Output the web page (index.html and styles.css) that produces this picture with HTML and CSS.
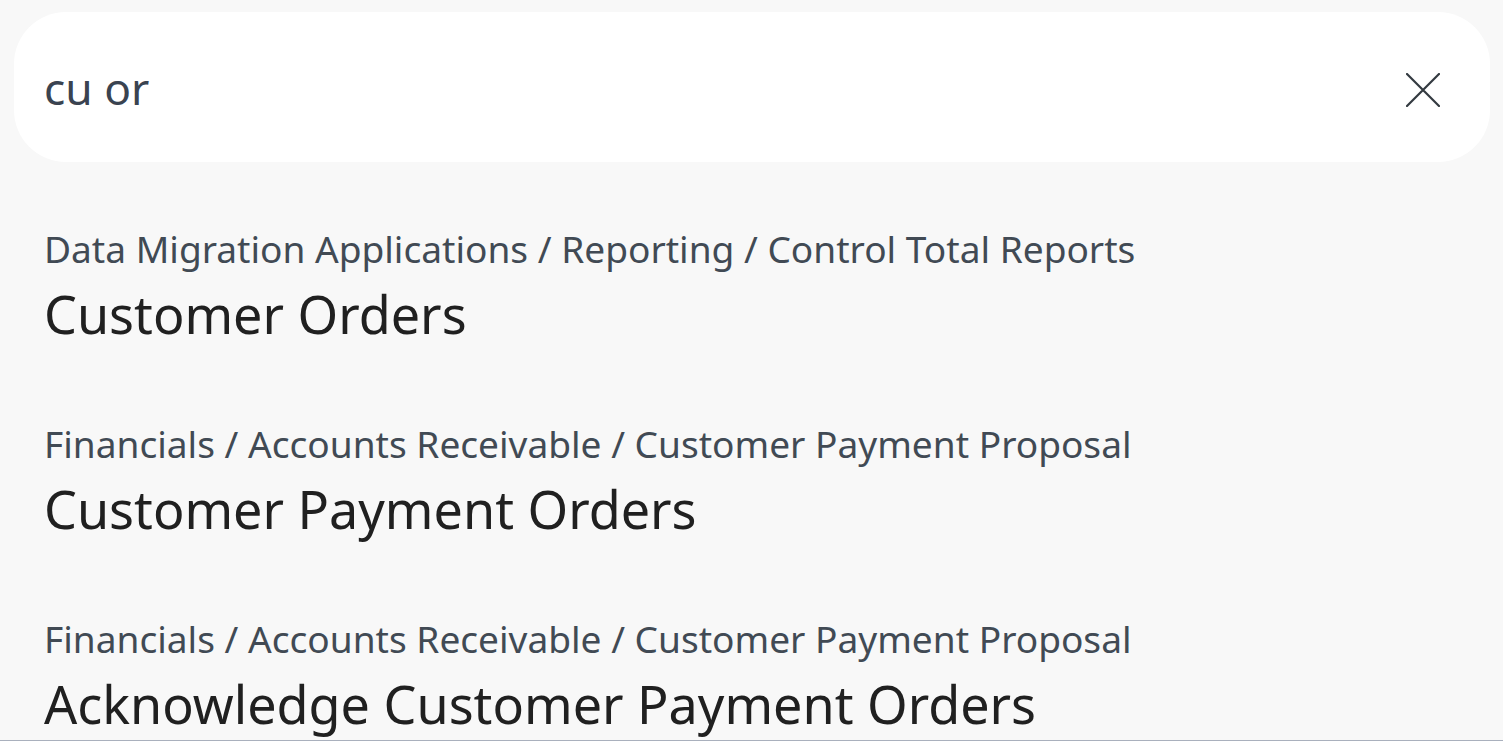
FILE: index.html
```html
<!DOCTYPE html>
<html>
<head>
<meta charset="utf-8">
<link rel="stylesheet" href="styles.css">
</head>
<body>
<div class="page">
  <div class="search">
    <span class="query">cu or</span>
    <button class="clear" aria-label="Clear">
      <svg width="34" height="34" viewBox="0 0 34 34"><path d="M1 1 L33 33 M33 1 L1 33" stroke="#333a40" stroke-width="2.2" fill="none" stroke-linecap="round"/></svg>
    </button>
  </div>
  <ul class="results">
    <li class="result">
      <div class="crumb">Data Migration Applications / Reporting / Control Total Reports</div>
      <div class="title">Customer Orders</div>
    </li>
    <li class="result">
      <div class="crumb">Financials / Accounts Receivable / Customer Payment Proposal</div>
      <div class="title">Customer Payment Orders</div>
    </li>
    <li class="result">
      <div class="crumb">Financials / Accounts Receivable / Customer Payment Proposal</div>
      <div class="title">Acknowledge Customer Payment Orders</div>
    </li>
  </ul>
</div>
</body>
</html>
```
FILE: styles.css
```css
html, body {
  margin: 0;
  padding: 0;
  height: 100%;
  overflow: hidden;
}
body {
  background: #f8f8f8;
  font-family: "Noto Sans", sans-serif;
  font-weight: 400;
}
.page {
  height: 740px;
  border-bottom: 1px solid #a9b0bd;
  overflow: hidden;
}
.search {
  margin: 12px 13px 0 14px;
  height: 150px;
  background: #ffffff;
  border-radius: 52px;
  display: flex;
  align-items: center;
  padding: 0 50px 0 30px;
}
.query {
  flex: 1;
  font-size: 44.3px;
  color: #3a4350;
  line-height: 60px;
  margin-top: 2px;
}
.clear {
  border: 0;
  background: none;
  padding: 0;
  width: 34px;
  height: 34px;
  display: flex;
  cursor: pointer;
  margin-top: 6px;
}
.results {
  list-style: none;
  margin: 0;
  padding: 61px 0 0 44px;
}
.result {
  height: 195px;
}
.crumb {
  font-size: 37.1px;
  color: #414a54;
  line-height: 52px;
}
.title {
  font-size: 52.1px;
  color: #202020;
  line-height: 78px;
}
```
